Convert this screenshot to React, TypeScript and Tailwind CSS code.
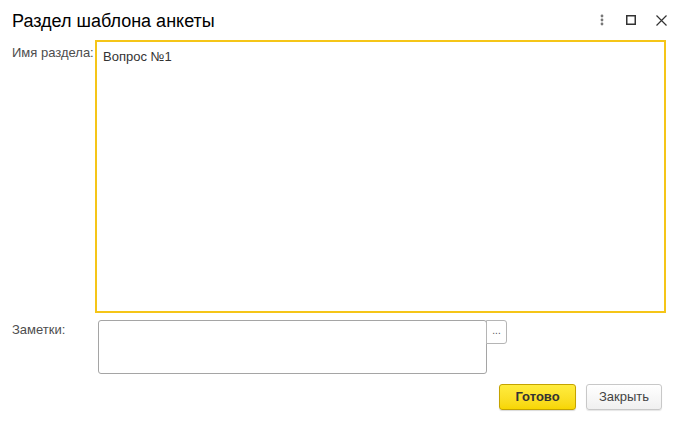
export default function App() {
  return (
    <div className="w-[681px] h-[422px] bg-white text-[#333] font-['Liberation_Sans',Arial,sans-serif] overflow-hidden">
      <div className="h-[40px] flex items-center pl-[12px] pr-[14px]">
        <h1 className="flex-1 text-[18px] text-black leading-none pt-[2px]">Раздел шаблона анкеты</h1>
        <div className="flex items-center gap-[20px]">
          <svg width="4" height="12" viewBox="0 0 4 12" className="mr-[2px]">
            <circle cx="2" cy="2" r="1.4" fill="#777" />
            <circle cx="2" cy="6" r="1.4" fill="#777" />
            <circle cx="2" cy="10" r="1.4" fill="#777" />
          </svg>
          <svg width="10" height="10" viewBox="0 0 10 10">
            <rect x="0.75" y="0.75" width="8.5" height="8.5" fill="none" stroke="#333" strokeWidth="1.5" />
          </svg>
          <svg width="11" height="11" viewBox="0 0 11 11">
            <path d="M0.5 0.5L10.5 10.5M10.5 0.5L0.5 10.5" stroke="#333" strokeWidth="1.2" />
          </svg>
        </div>
      </div>

      <div className="flex">
        <div className="w-[95px] shrink-0 whitespace-nowrap pl-[12px] pt-[3px] text-[13px] text-[#4d4d4d]">Имя раздела:</div>
        <div className="w-[571px] h-[273px] shrink-0 border-2 border-[#f5c518] px-[6px] pt-[5px] text-[13px] text-[#333]">Вопрос №1</div>
      </div>

      <div className="flex mt-[7px]">
        <div className="w-[98px] shrink-0 whitespace-nowrap pl-[12px] pt-0 text-[13px] text-[#4d4d4d]">Заметки:</div>
        <div className="w-[389px] h-[54px] shrink-0 border border-[#a5a5a5] rounded-[3px]" />
        <button className="w-[21px] h-[24px] shrink-0 -ml-px border border-[#b5b5b5] rounded-r-[3px] bg-white text-[10px] text-[#555] leading-none flex items-center justify-center pb-[2px]">...</button>
      </div>

      <div className="flex justify-end gap-[10px] pr-[19px] mt-[10px]">
        <button className="w-[77px] h-[26px] rounded-[3px] border border-[#c4a300] bg-gradient-to-b from-[#ffec3d] to-[#f7d600] text-[13px] font-bold text-[#333] shadow-[0_1px_1px_rgba(0,0,0,0.15)]">Готово</button>
        <button className="w-[76px] h-[26px] rounded-[3px] border border-[#c8c8c8] bg-gradient-to-b from-white to-[#f0f0f0] text-[13px] text-[#444] shadow-[0_1px_1px_rgba(0,0,0,0.1)]">Закрыть</button>
      </div>
    </div>
  );
}
